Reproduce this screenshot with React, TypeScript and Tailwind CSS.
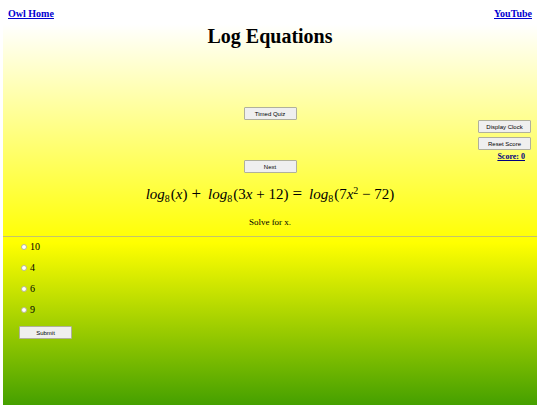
import type { ReactNode } from "react"

const answers = ["10", "4", "6", "9"]

function QuizButton({ children, type = "button" }: { children: ReactNode; type?: "button" | "submit" }) {
  return (
    <button
      type={type}
      className="block w-[53px] h-[13px] rounded-[1px] border border-[#b0b09c] bg-[#efefef] font-['Liberation_Sans',sans-serif] text-[6px] leading-[10px] text-black text-center"
    >
      {children}
    </button>
  )
}

function Log({ children }: { children: ReactNode }) {
  return (
    <span>
      <i>log</i>
      <sub className="text-[10px]">8</sub>
      <span className="pl-px">({children})</span>
    </span>
  )
}

function Operator({ children }: { children: ReactNode }) {
  return <span className="pl-1 pr-[7px] text-[17px]">{children}</span>
}

export default function App() {
  return (
    <div className="mx-[3px] min-h-screen bg-[linear-gradient(to_bottom,#ffffff_6%,#ffff00_60%,#45a000_100%)] font-['Liberation_Serif',serif] text-[9px] text-black">
      <header>
        <nav className="flex justify-between px-[5px] pt-2 text-[10px] leading-3 font-bold text-[#0000d0] underline">
          <a href="#home">Owl Home</a>
          <a href="#youtube">YouTube</a>
        </nav>
        <h1 className="mt-1 text-[20px] leading-6 font-bold text-center">Log Equations</h1>
      </header>

      <main>
        <div className="flex justify-center pt-[59px]">
          <QuizButton>Timed Quiz</QuizButton>
        </div>

        {/* Clock and score */}
        <div className="flex flex-col items-end gap-1 pr-[6px]">
          <QuizButton>Display Clock</QuizButton>
          <QuizButton>Reset Score</QuizButton>
          <p className="pr-[6px] text-[8px] leading-[6px] font-bold underline text-[#000080]">Score: 0</p>
        </div>

        <div className="flex justify-center">
          <QuizButton>Next</QuizButton>
        </div>

        {/* Question */}
        <div className="flex justify-center items-baseline pt-[11px] text-[15px] leading-5 whitespace-nowrap">
          <Log><i>x</i></Log>
          <Operator>+</Operator>
          <Log>3<i>x</i> + 12</Log>
          <Operator>=</Operator>
          <Log>7<i>x</i><sup className="text-[10px]">2</sup> − 72</Log>
        </div>
        <p className="pt-3 text-[9px] leading-3 text-center">Solve for x.</p>
        <hr className="mt-2 border-[#c4c46c]" />

        {/* Answers */}
        <form className="px-4 pt-1">
          <div className="flex flex-col gap-[9px] pl-[2px]">
            {answers.map((answer) => (
              <label key={answer} className="flex items-center gap-[3px] text-[10px] leading-3">
                <input
                  type="radio"
                  name="answer"
                  value={answer}
                  className="size-[6px] appearance-none rounded-full border border-[#b8b890] bg-white checked:bg-[#0075ff]"
                />
                {answer}
              </label>
            ))}
          </div>
          <div className="pt-[10px]">
            <QuizButton type="submit">Submit</QuizButton>
          </div>
        </form>
      </main>
    </div>
  )
}
